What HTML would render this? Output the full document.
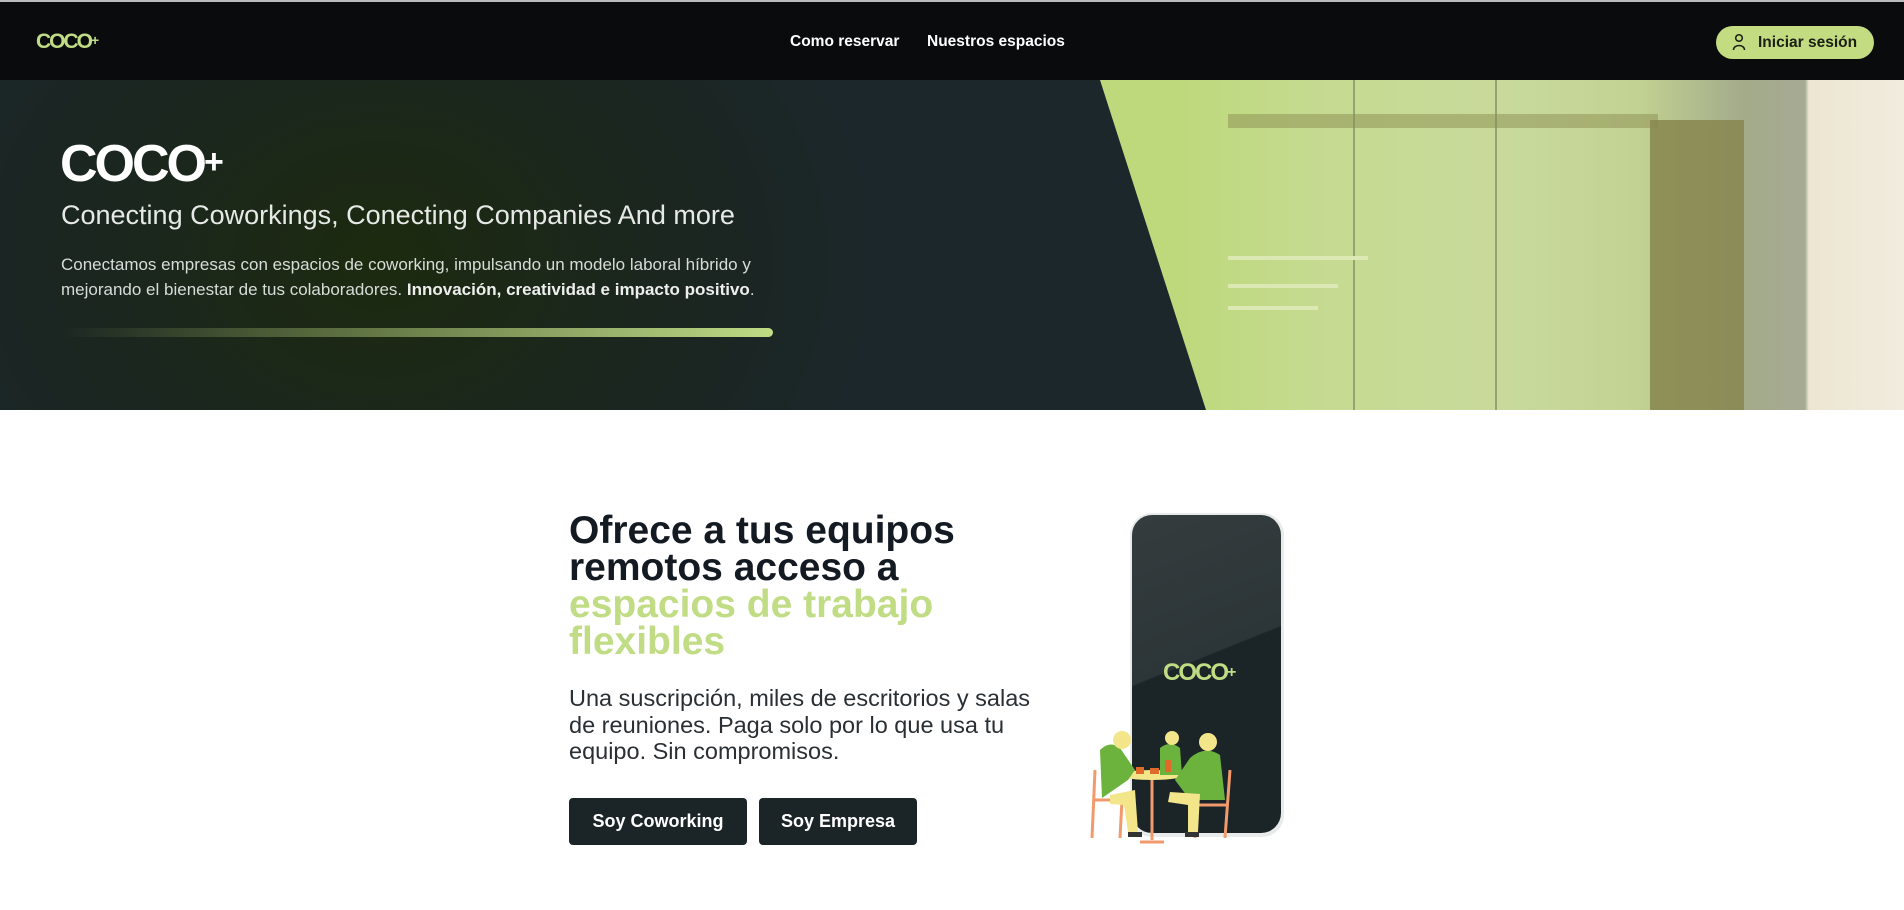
<!DOCTYPE html>
<html><head><meta charset="utf-8"><style>
*{margin:0;padding:0;box-sizing:border-box}
body{width:1904px;height:910px;overflow:hidden;background:#fff;font-family:"Liberation Sans",sans-serif;position:relative}
.nav{position:absolute;left:0;top:0;width:1904px;height:80px;background:#0a0b0d;border-top:2px solid #bbb}
.abs{position:absolute}
.logo{font-weight:700;letter-spacing:-3px;line-height:1}
.hero{position:absolute;left:0;top:80px;width:1904px;height:330px;overflow:hidden;background:radial-gradient(ellipse 500px 400px at 380px 180px,#1c2a0f 0%,#1b2620 60%,#1b272a 100%)}
.img{position:absolute;left:0;top:0;width:1904px;height:330px;clip-path:polygon(1100px 0,1904px 0,1904px 330px,1206px 330px);background:linear-gradient(90deg,#bcd97a 0%,#bdd97c 62%,#c6da92 70%,#c8d99c 80%,#c2d292 86%,#a3ab8a 91.6%,#a7aa93 94.8%,#ece6d2 95%,#f1ecde 100%)}
h2{position:absolute;left:569px;top:512px;font-size:39px;line-height:37px;font-weight:700;color:#141a22}
.btn{position:absolute;top:798px;height:47px;background:#1b2427;border-radius:4px;color:#fff;font-weight:700;font-size:18px;line-height:47px;text-align:center}
</style></head><body>
<div class="nav">
 <div class="abs logo" style="left:36px;top:29px;font-size:21px;color:#c0dc84;letter-spacing:-2px">COCO<span style="font-size:14px;letter-spacing:0;vertical-align:3px">+</span></div>
 <div class="abs" style="left:790px;top:31px;font-size:15.5px;font-weight:700;color:#fff">Como reservar</div>
 <div class="abs" style="left:927px;top:31px;font-size:15.5px;font-weight:700;color:#fff">Nuestros espacios</div>
 <div class="abs" style="left:1716px;top:24px;width:158px;height:33px;border-radius:17px;background:#c3dc82;color:#1a1f12;font-weight:700;font-size:15.5px;line-height:33px;padding-left:42px">Iniciar sesión
  <svg class="abs" style="left:16px;top:7px" width="14" height="18" viewBox="0 0 14 18"><circle cx="7" cy="5" r="3.3" fill="none" stroke="#1a1f12" stroke-width="1.5"/><path d="M1.5 17 C1.5 11 12.5 11 12.5 17" fill="none" stroke="#1a1f12" stroke-width="1.5"/></svg></div>
</div>
<div class="hero">
 <div class="img">
  <div class="abs" style="left:1228px;top:34px;width:430px;height:14px;background:#8f9455;opacity:.55"></div>
  <div class="abs" style="left:1353px;top:0;width:2px;height:330px;background:#7f8f5c;opacity:.7"></div>
  <div class="abs" style="left:1495px;top:0;width:2px;height:330px;background:#7f8f5c;opacity:.7"></div>
  <div class="abs" style="left:1650px;top:40px;width:94px;height:290px;background:#87864f;opacity:.85"></div>
  <div class="abs" style="left:1228px;top:176px;width:140px;height:4px;background:#dde9b4"></div>
  <div class="abs" style="left:1228px;top:204px;width:110px;height:4px;background:#dde9b4"></div>
  <div class="abs" style="left:1228px;top:226px;width:90px;height:4px;background:#dde9b4"></div>
 </div>
 <div class="abs logo" style="left:60px;top:58px;font-size:52px;color:#fff">COCO<span style="font-size:34px;letter-spacing:0;vertical-align:8px">+</span></div>
 <div class="abs" style="left:61px;top:120px;font-size:27px;color:#e6e9e6">Conecting Coworkings, Conecting Companies And more</div>
 <div class="abs" style="left:61px;top:172px;font-size:17px;line-height:25px;color:#d8dcd8;width:730px">Conectamos empresas con espacios de coworking, impulsando un modelo laboral híbrido y mejorando el bienestar de tus colaboradores. <b style="color:#eee">Innovación, creatividad e impacto positivo</b>.</div>
 <div class="abs" style="left:61px;top:248px;width:712px;height:9px;border-radius:5px;background:linear-gradient(90deg,rgba(192,220,132,0),#c0dc84)"></div>
</div>
<h2>Ofrece a tus equipos<br>remotos acceso a<br><span style="color:#c0dc84">espacios de trabajo<br>flexibles</span></h2>
<div class="abs" style="left:569px;top:685px;font-size:23.5px;line-height:26.5px;color:#2a2f33;width:486px">Una suscripción, miles de escritorios y salas de reuniones. Paga solo por lo que usa tu equipo. Sin compromisos.</div>
<div class="btn" style="left:569px;width:178px">Soy Coworking</div>
<div class="btn" style="left:759px;width:158px">Soy Empresa</div>
<div class="abs" style="left:1130px;top:513px;width:154px;height:324px;border-radius:22px;background:#e8ebea"></div>
<div class="abs" style="left:1132px;top:515px;width:149px;height:318px;border-radius:20px;overflow:hidden;background:linear-gradient(158deg,#343c3e 0%,#2c3537 45%,#1b2427 45.5%,#1b2427 100%)">
 <div class="abs logo" style="left:31px;top:146px;font-size:24px;color:#c0dc84;letter-spacing:-2px">COCO<span style="font-size:16px;letter-spacing:0;vertical-align:3px">+</span></div>
</div>
<svg class="abs" style="left:1080px;top:720px" width="180" height="130" viewBox="0 0 180 130">
 <g stroke="#f29a6c" stroke-width="3" fill="none">
  <path d="M15 50 L12 118 M40 118 L42 80 M15 80 H45"/>
  <path d="M117 80 L115 118 M150 50 L145 118 M110 85 H148"/>
  <path d="M72 55 V120 M60 122 H84"/>
 </g>
 <ellipse cx="72" cy="55" rx="33" ry="5" fill="#f3e58a"/>
 <path d="M20 30 Q30 20 40 28 L55 50 L48 60 L22 78 Z" fill="#6cb33d"/>
 <path d="M30 75 L55 70 L58 112 L48 112 L44 85 L30 84Z" fill="#f3e58a"/>
 <circle cx="42" cy="20" r="9" fill="#f3e58a"/>
 <path d="M80 28 Q90 20 100 28 L102 55 L80 55Z" fill="#6cb33d"/>
 <circle cx="92" cy="18" r="7" fill="#f3e58a"/>
 <path d="M110 38 Q125 25 140 35 L145 80 L110 80 L95 60 Z" fill="#6cb33d"/>
 <path d="M90 72 L120 74 L118 112 L108 112 L108 85 L88 82Z" fill="#f3e58a"/>
 <circle cx="128" cy="22" r="9" fill="#f3e58a"/>
 <path d="M56 47 h8 v7 h-8z M70 48 h9 v6 h-9z M85 40 h6 v12 h-6z" fill="#e06a2a"/>
 <path d="M48 112 h14 v5 h-14z M105 112 h14 v5 h-14z" fill="#333"/>
</svg>
</body></html>
